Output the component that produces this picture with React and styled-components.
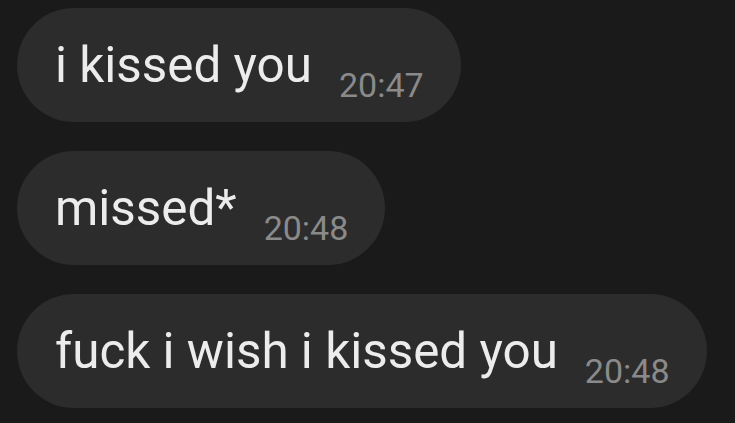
import React from "react";
import styled, { createGlobalStyle } from "styled-components";

const Global = createGlobalStyle`
  html, body {
    margin: 0;
    padding: 0;
    background: #1a1a1a;
  }
  body {
    width: 735px;
    height: 423px;
    overflow: hidden;
    font-family: Roboto, "Noto Sans", sans-serif;
  }
`;

const Thread = styled.div`
  display: flex;
  flex-direction: column;
  align-items: flex-start;
  gap: 29px;
  padding: 8px 0 0 17px;
  background: #1a1a1a;
  min-height: 423px;
  box-sizing: border-box;
`;

const Bubble = styled.div`
  display: flex;
  align-items: flex-start;
  height: 114px;
  box-sizing: border-box;
  padding: 0 37px 0 38px;
  border-radius: 57px;
  background: #2c2c2c;
`;

const Text = styled.span`
  padding-top: 32px;
  font-size: 49.4px;
  line-height: 50px;
  color: #ececec;
  white-space: nowrap;
`;

const Time = styled.span`
  margin-top: 60px;
  margin-left: 27px;
  font-size: 34px;
  line-height: 34px;
  color: #8a8a8a;
  white-space: nowrap;
`;

const messages = [
  { text: "i kissed you", time: "20:47" },
  { text: "missed*", time: "20:48" },
  { text: "fuck i wish i kissed you", time: "20:48" },
];

export default function App() {
  return (
    <>
      <Global />
      <Thread>
        {messages.map((m, i) => (
          <Bubble key={i}>
            <Text>{m.text}</Text>
            <Time>{m.time}</Time>
          </Bubble>
        ))}
      </Thread>
    </>
  );
}
